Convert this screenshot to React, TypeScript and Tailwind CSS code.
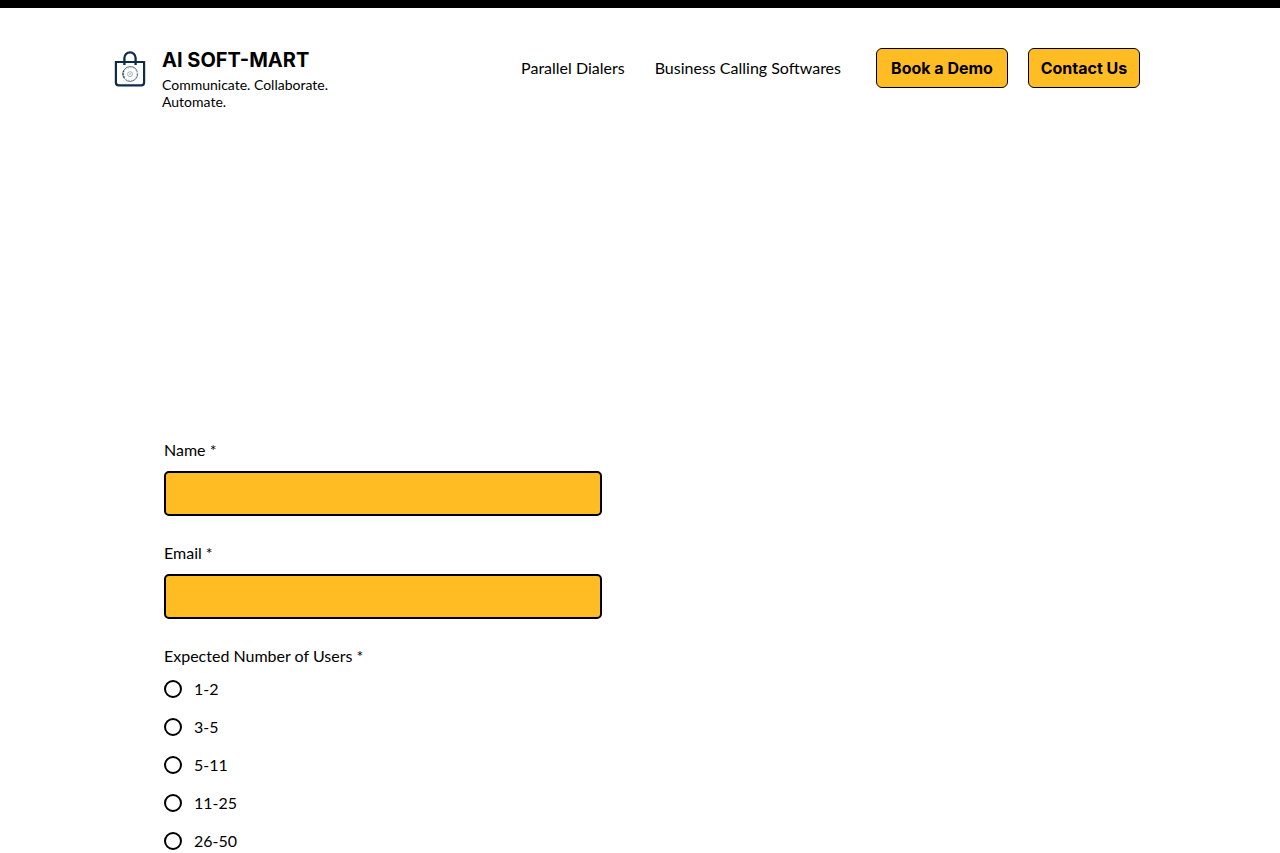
import React, { useState } from "react";

const routes = [
	{
		name: "Parallel Dialers",
		link: "#dialers",
	},
	{
		name: "Business Calling Softwares",
		link: "#softwares",
	},
];

const actions = [
	{
		name: "Book a Demo",
		link: "#demo",
		width: "w-[132px]",
	},
	{
		name: "Contact Us",
		link: "#contact",
		width: "w-28",
	},
];

const fields = [
	{ id: "name", label: "Name *", type: "text" },
	{ id: "email", label: "Email *", type: "email" },
];

const userRanges = ["1-2", "3-5", "5-11", "11-25", "26-50"];

function Logo() {
	return (
		<svg
			className="h-10 w-10 shrink-0"
			viewBox="0 0 40 40"
			fill="none"
			stroke="#0f2b4c"
			aria-hidden="true"
		>
			<path
				d="M5.9 14h28.2v20.6a2.8 2.8 0 0 1-2.8 2.8H8.7a2.8 2.8 0 0 1-2.8-2.8z"
				strokeWidth="2.2"
			/>
			<path d="M14.4 17V10a5.6 5.6 0 0 1 11.2 0v7" strokeWidth="2.3" />
			<circle cx="20.2" cy="26" r="7.4" strokeWidth="0.9" strokeDasharray="17 1 8 1.5" opacity="0.75" />
			<circle cx="20.2" cy="26" r="6.2" strokeWidth="0.7" strokeDasharray="1 1.6" opacity="0.4" />
			<circle cx="20" cy="26.2" r="2.5" strokeWidth="0.7" opacity="0.5" />
			<circle cx="20" cy="26.2" r="0.8" strokeWidth="0.6" opacity="0.4" />
			<path d="M14 22.3c-1.4 2.4-1.2 5.4.6 7.8" strokeWidth="1.2" strokeDasharray="2 1" opacity="0.8" />
		</svg>
	);
}

function Navbar() {
	return (
		<header className="flex flex-wrap items-start justify-between gap-x-8 gap-y-4 pt-10 pr-6 pl-6 lg:pr-[140px] lg:pl-[110px]">
			<a href="#" className="flex gap-3">
				<Logo />
				<span className="flex w-48 flex-col">
					<span className="font-['Inter','Liberation_Sans',sans-serif] text-xl leading-6 font-bold whitespace-nowrap">
						AI SOFT-MART
					</span>
					<span className="mt-1 text-sm leading-[17px]">
						Communicate. Collaborate. Automate.
					</span>
				</span>
			</a>
			<div className="flex flex-wrap items-center gap-x-[35px] gap-y-4">
				<nav className="flex gap-[30px]">
					{routes.map(({ name, link }) => (
						<a key={name} href={link} className="text-base hover:underline">
							{name}
						</a>
					))}
				</nav>
				<div className="flex gap-5">
					{actions.map(({ name, link, width }) => (
						<a
							key={name}
							href={link}
							className={`flex h-10 items-center justify-center rounded-md border border-black bg-[#ffbd23] font-['Inter','Liberation_Sans',sans-serif] text-base font-bold whitespace-nowrap ${width}`}
						>
							{name}
						</a>
					))}
				</div>
			</div>
		</header>
	);
}

function DemoForm() {
	const [users, setUsers] = useState("");

	return (
		<form className="mx-6 mt-[328px] max-w-[438px] lg:ml-[164px]">
			{fields.map(({ id, label, type }) => (
				<div key={id} className="mb-[25px]">
					<label htmlFor={id} className="block leading-6">
						{label}
					</label>
					<input
						id={id}
						name={id}
						type={type}
						required
						className="mt-[9px] block h-[45px] w-full rounded-[5px] border-2 border-black bg-[#ffbd23] px-3 outline-none"
					/>
				</div>
			))}
			<fieldset>
				<legend className="mb-[9px] leading-6">Expected Number of Users *</legend>
				<div className="flex flex-col gap-[14px]">
					{userRanges.map((range) => (
						<label key={range} className="flex items-center gap-3 leading-6">
							<input
								type="radio"
								name="users"
								value={range}
								checked={users === range}
								onChange={() => setUsers(range)}
								className="h-[18px] w-[18px] appearance-none rounded-full border-2 border-black checked:border-[5px]"
							/>
							{range}
						</label>
					))}
				</div>
			</fieldset>
		</form>
	);
}

export default function App() {
	return (
		<div className="border-t-8 border-black bg-white font-['Lato','Open_Sans',sans-serif] text-base text-black">
			<Navbar />
			<main>
				<DemoForm />
			</main>
		</div>
	);
}
